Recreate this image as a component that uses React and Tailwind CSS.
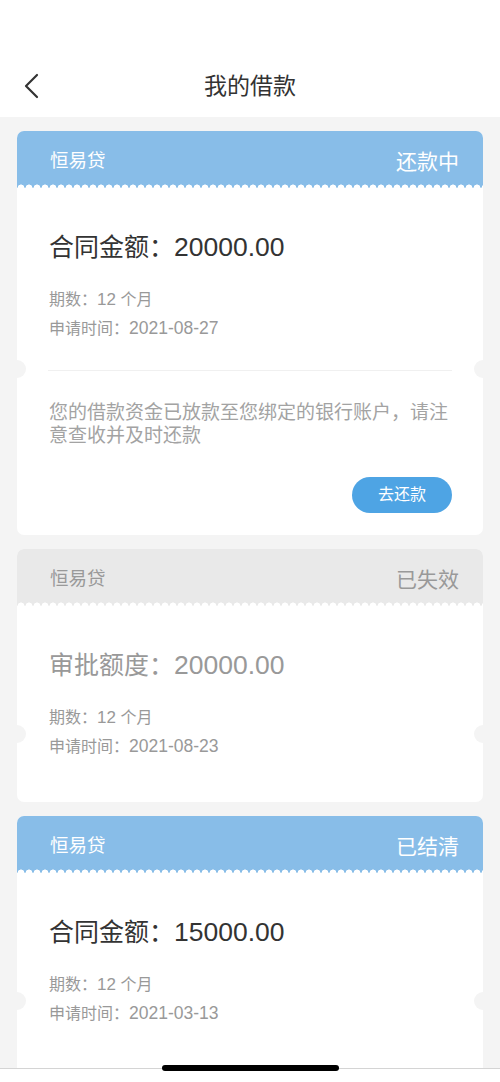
import React from "react";

const font = { fontFamily: '"Liberation Sans", "Noto Sans CJK SC", sans-serif' };

function Scallop() {
  return (
    <div className="absolute left-0 right-0 bottom-0 h-[4px] bg-[radial-gradient(circle_at_4px_4px,#ffffff_3.2px,transparent_3.8px)] bg-[length:8px_4px] bg-repeat-x" />
  );
}

function Notches({ top }) {
  return (
    <>
      <div className={`absolute -left-[9px] ${top} w-[18px] h-[18px] -mt-[9px] rounded-full bg-[#f4f4f4]`} />
      <div className={`absolute -right-[9px] ${top} w-[18px] h-[18px] -mt-[9px] rounded-full bg-[#f4f4f4]`} />
    </>
  );
}

function Card({ active, status, label, amount, date, notchTop, children }) {
  return (
    <div className="relative bg-white rounded-[7px] mx-[17px]">
      <div
        className={`relative h-[57px] rounded-t-[7px] flex items-center justify-between pl-[33px] pr-[24px] pt-[4px] ${
          active ? "bg-[#88bde8] text-white" : "bg-[#e9e9e9] text-[#999999]"
        }`}
      >
        <span className="text-[18.5px] leading-none">恒易贷</span>
        <span className="text-[21px] leading-none">{status}</span>
        <Scallop />
      </div>
      <Notches top={notchTop} />
      <div className="px-[32px] pt-[43px]">
        <div className={`text-[25px] leading-[32px] ${active ? "text-[#333333]" : "text-[#999999]"}`}>
          {label}：<span className="text-[26.5px]">{amount}</span>
        </div>
        <div className="mt-[23px] text-[16px] leading-[28px] text-[#999999]">
          期数：<span className="text-[17px]">12</span> 个月
        </div>
        <div className="text-[16px] leading-[28px] text-[#999999]">
          申请时间：<span className="text-[17.5px]">{date}</span>
        </div>
      </div>
      {children}
    </div>
  );
}

export default function App() {
  return (
    <div style={font} className="relative w-[500px] h-[1082px] overflow-hidden bg-[#f4f4f4] flex flex-col">
      <div className="h-[117px] bg-white shrink-0 relative flex items-end">
        <div className="w-full h-[60px] flex items-center justify-center relative">
          <svg className="absolute left-[22px] top-[16px]" width="18" height="26" viewBox="0 0 18 26">
            <polyline points="15,2 4,13 15,24" fill="none" stroke="#333333" strokeWidth="2.2" strokeLinecap="round" strokeLinejoin="round" />
          </svg>
          <span className="text-[23px] text-[#333333] leading-none -mt-[2px]">我的借款</span>
        </div>
      </div>
      <div className="flex-1 overflow-hidden pt-[14px] flex flex-col gap-[14px]">
        <Card active status="还款中" label="合同金额" amount="20000.00" date="2021-08-27" notchTop="top-[238px]">
          <div className="mx-[31px] mt-[27px] h-px bg-[#f0f0f0]" />
          <div className="px-[32px] pt-[30px] text-[19px] leading-[23px] text-[#a3a3a3]">
            您的借款资金已放款至您绑定的银行账户，请注意查收并及时还款
          </div>
          <div className="flex justify-end px-[31px] pt-[30px] pb-[22px]">
            <div className="w-[100px] h-[36px] rounded-full bg-[#4ea4e4] text-white text-[16px] flex items-center justify-center">
              去还款
            </div>
          </div>
        </Card>
        <Card status="已失效" label="审批额度" amount="20000.00" date="2021-08-23" notchTop="top-[185px]">
          <div className="h-[41px]" />
        </Card>
        <Card active status="已结清" label="合同金额" amount="15000.00" date="2021-03-13" notchTop="top-[185px]">
          <div className="h-[60px]" />
        </Card>
      </div>
      <div className="h-[14px] shrink-0 bg-white border-t border-[#d4d4d4]" />
      <div className="absolute left-[162px] top-[1065px] w-[177px] h-[6px] rounded-full bg-black" />
    </div>
  );
}
